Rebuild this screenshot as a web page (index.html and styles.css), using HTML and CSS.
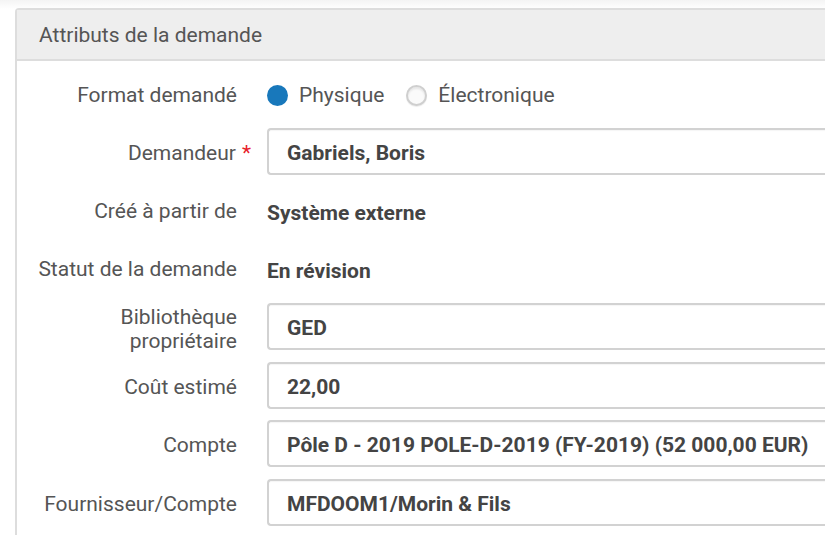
FILE: index.html
```html
<!DOCTYPE html>
<html lang="fr">
<head>
<meta charset="utf-8">
<link rel="stylesheet" href="styles.css">
</head>
<body>
<section class="panel">
  <header class="panel-head">Attributs de la demande</header>
  <div class="form">
    <div class="label first">Format demandé</div>
    <div class="value radios first">
      <span class="radio on"></span><span class="rlabel">Physique</span>
      <span class="radio"></span><span class="rlabel">Électronique</span>
    </div>

    <div class="label">Demandeur<span class="req">*</span></div>
    <div class="value"><div class="input">Gabriels, Boris</div></div>

    <div class="label plainlabel">Créé à partir de</div>
    <div class="value plain">Système externe</div>

    <div class="label plainlabel">Statut de la demande</div>
    <div class="value plain">En révision</div>

    <div class="label two">Bibliothèque<br>propriétaire</div>
    <div class="value"><div class="input">GED</div></div>

    <div class="label">Coût estimé</div>
    <div class="value"><div class="input">22,00</div></div>

    <div class="label">Compte</div>
    <div class="value"><div class="input">Pôle D - 2019 POLE-D-2019 (FY-2019) (52 000,00 EUR)</div></div>

    <div class="label">Fournisseur/Compte</div>
    <div class="value"><div class="input">MFDOOM1/Morin &amp; Fils</div></div>
  </div>
</section>
</body>
</html>
```
FILE: styles.css
```css
html, body {
  margin: 0;
  padding: 0;
  overflow: hidden;
  height: 535px;
}
body {
  background: linear-gradient(#f4f4f4, #ffffff 9px);
  font-family: Roboto, "Liberation Sans", sans-serif;
  padding: 8px 0 0 15px;
  color: #555;
}
.panel {
  width: 900px;
  border: 2px solid #dddddd;
  border-right: none;
  border-bottom: none;
  border-radius: 4px 0 0 0;
  background: #fff;
  height: 600px;
}
.panel-head {
  background: #eeeeee;
  height: 51px;
  border-bottom: 2px solid #dddddd;
  box-sizing: border-box;
  padding-left: 22px;
  font-size: 21px;
  line-height: 51px;
  color: #555;
}
.form {
  display: grid;
  grid-template-columns: 220px 1fr;
  column-gap: 30px;
  row-gap: 11.5px;
  grid-auto-rows: 47px;
  padding-top: 8px;
}
.label {
  text-align: right;
  font-size: 21px;
  color: #555;
  display: flex;
  align-items: center;
  justify-content: flex-end;
  line-height: 24px;
  padding-top: 3px;
}
.label.first, .value.first { padding-top: 5px; }
.label.plainlabel { padding-top: 2px; }
.label.two { padding-top: 4px; }
.req { color: #e8202a; margin-left: 6px; margin-right: -14px; }
.value {
  display: flex;
  align-items: center;
  font-size: 21px;
}
.plain {
  font-weight: bold;
  color: #444;
  padding-top: 6px;
}
.input {
  box-sizing: border-box;
  height: 47px;
  width: 620px;
  border: 2px solid #d2d2d2;
  border-right: none;
  border-radius: 4px 0 0 4px;
  padding-left: 18px;
  padding-top: 3px;
  display: flex;
  align-items: center;
  font-weight: bold;
  color: #444;
  box-shadow: inset 0 1px 1px rgba(0,0,0,0.04);
}
.radios { gap: 0; }
.radio {
  width: 21px;
  height: 21px;
  border-radius: 50%;
  box-sizing: border-box;
  border: 2px solid #cfcfcf;
  background: #fafafa;
  box-shadow: inset 0 2px 2px rgba(0,0,0,0.08), 0 1px 1px rgba(0,0,0,0.08);
  margin-right: 11px;
}
.radio.on {
  background: #1878bb;
  border: none;
  box-shadow: none;
}
.rlabel { margin-right: 22px; color: #555; }
```
